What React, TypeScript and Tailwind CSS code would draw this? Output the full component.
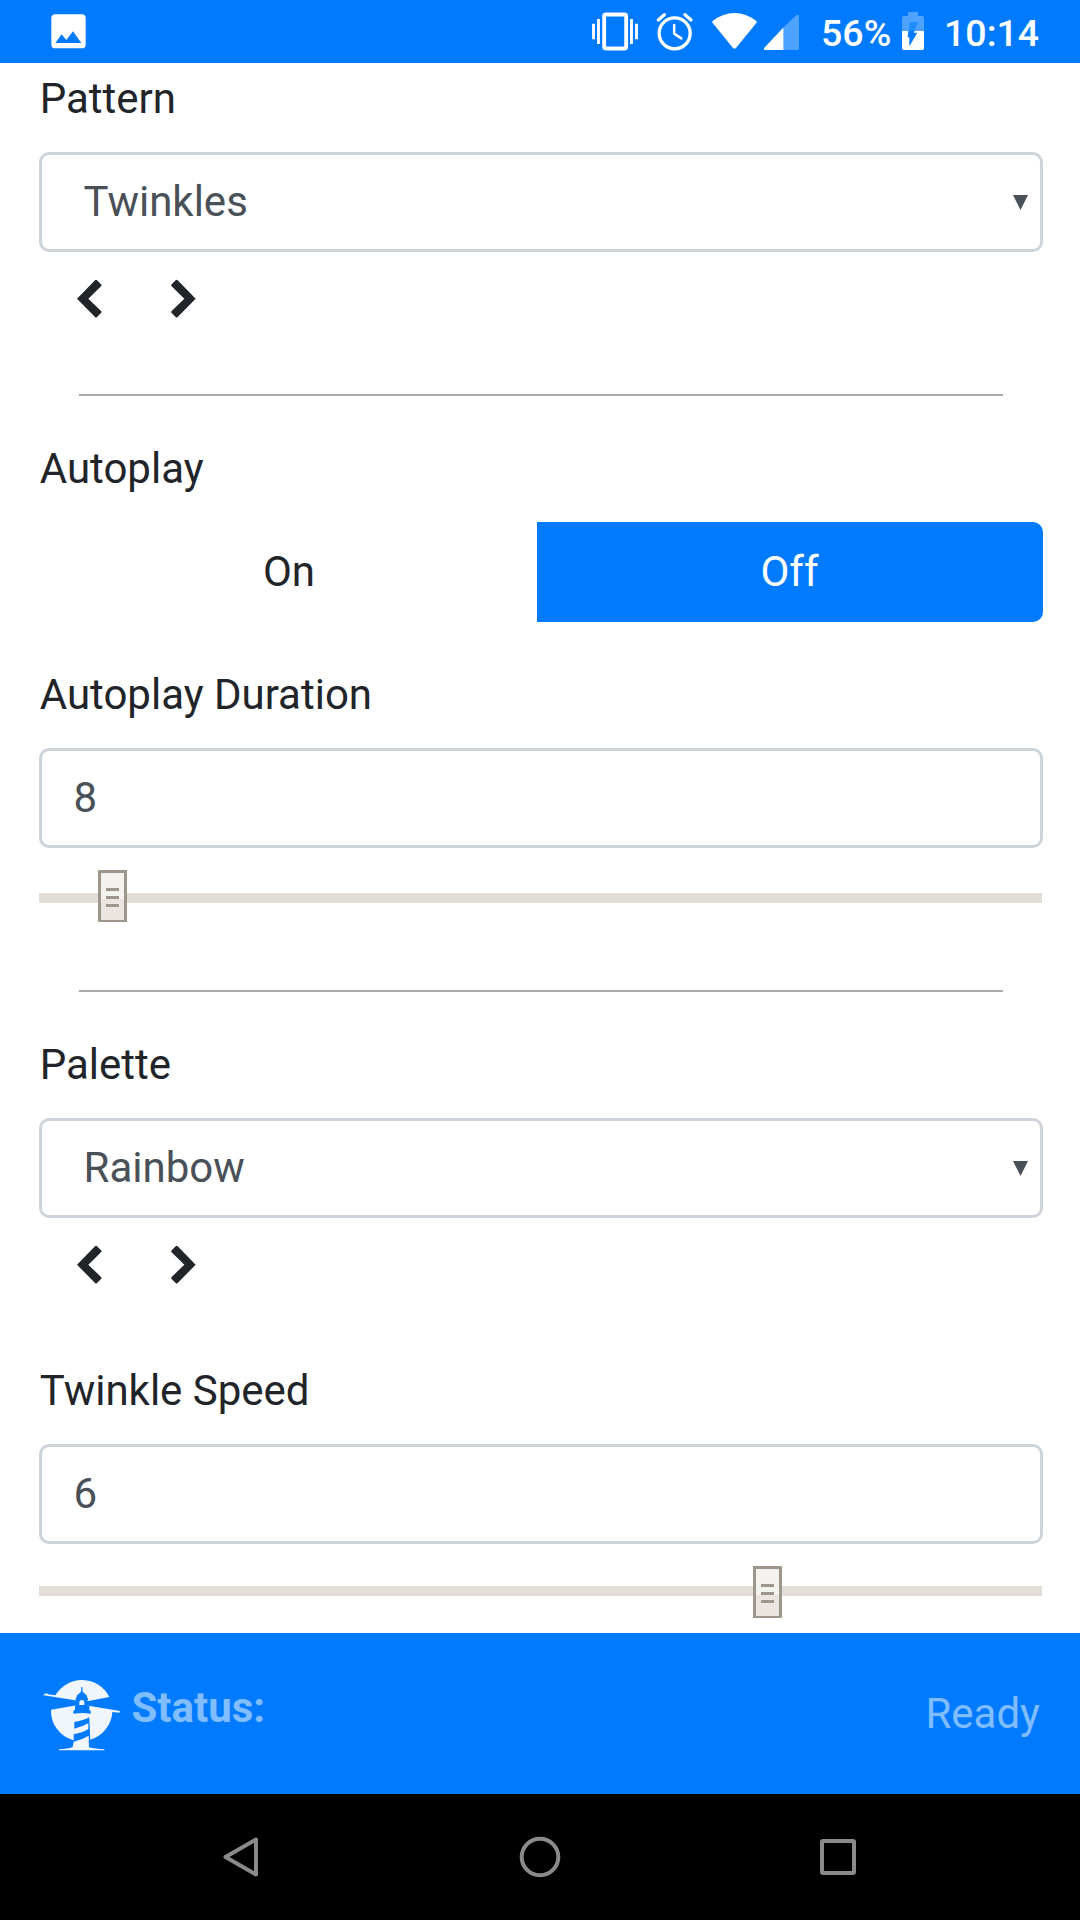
import React from "react";

function StatusBar() {
  return (
    <header className="flex h-[63px] shrink-0 items-start bg-[#007bff] pl-[50px] text-white">
      <svg className="mt-[13px] h-[37px] w-[37px] shrink-0" viewBox="150 39 111 111">
        <path
          fill="#fff"
          fillRule="evenodd"
          d="M166 43H246Q257 43 257 54V134Q257 145 246 145H166Q154 145 154 134V54Q154 43 166 43ZM166 129H244L219 94L199 120L185 103Z"
        />
      </svg>
      <svg className="mt-[10px] ml-[503px] h-[44px] w-[50px] shrink-0" viewBox="60 30 150 132">
        <g fill="none" stroke="#fff">
          <rect x="102.5" y="43.5" width="66" height="102" rx="5" strokeWidth="11.5" />
          <path strokeWidth="8.5" d="M70.5 71V118M85.5 57V132M184.500 57V132M199.500 71V118" />
        </g>
      </svg>
      <svg className="mt-[10px] ml-[15px] h-[44px] w-[40px] shrink-0" viewBox="255 30 120 132">
        <g fill="none" stroke="#fff">
          <circle cx="314" cy="100" r="46.500" strokeWidth="10" />
          <path strokeWidth="7.500" strokeLinecap="round" strokeLinejoin="round" d="M312.500 75V101L334 115" />
          <path strokeWidth="10" strokeLinecap="round" d="M265 60L283 44M345 44L363 60" />
        </g>
      </svg>
      <svg className="mt-[10px] ml-[15.500px] h-[44px] w-[47px] shrink-0" viewBox="422 30 141 132">
        <path
          fill="#fff"
          d="M427 63Q458 39 492.500 39Q527 39 558 63Q561 65 558 69L497 144Q492.500 149 488 144L427 69Q424 66 427 63Z"
        />
      </svg>
      <svg className="mt-[10px] ml-[5px] h-[44px] w-[38px] shrink-0" viewBox="579 30 114 132">
        <path fill="#fff" d="M641 82V150H585Q579 149 583 143Z" />
        <path fill="#4da3ff" d="M641 82L679 46Q687 41 687 49V145Q687 150 682 150H641Z" />
      </svg>
      <span className="mt-[10px] ml-[20.500px] w-[71px] text-[37.5px] leading-[46px] font-medium whitespace-nowrap">
        56%
      </span>
      <svg className="mt-[10px] ml-[9px] h-[44px] w-[24px] shrink-0" viewBox="993 30 72 132">
        <path fill="#4da3ff" d="M1014 36H1044V48H1057Q1062 48 1062 53V93H996V53Q996 48 1001 48H1014Z" />
        <path fill="#fff" d="M996 93H1062V145Q1062 150 1057 150H1001Q996 150 996 145Z" />
        <path fill="#1f8cff" d="M1020 66H1044L1034 93H1015Z" />
        <path fill="#007bff" d="M1015 93H1034L1031 98H1042L1018 139V112H1013Z" />
      </svg>
      <span className="mt-[10px] ml-[19px] text-[37.5px] leading-[46px] font-medium whitespace-nowrap">
        10:14
      </span>
    </header>
  );
}

function Label({ children }: { children: React.ReactNode }) {
  return <h2 className="h-[63px] pl-[0.750px] text-[42px] leading-[63px] whitespace-nowrap">{children}</h2>;
}

function SelectBox({ value }: { value: string }) {
  return (
    <div className="mt-[22px] flex h-[100px] items-center justify-between rounded-[10px] border-3 border-[#ced4da] pr-[12px] pl-[41.500px] text-[42px] leading-[63px] text-[#495057]">
      <span className="mb-[2px]">{value}</span>
      <svg className="h-[15px] w-[15px]" viewBox="0 0 15 15">
        <path fill="#495057" d="M0 0H15L7.500 15Z" />
      </svg>
    </div>
  );
}

function Stepper() {
  return (
    <div className="mt-[26.500px] flex h-[39.500px] gap-[67px] pl-[37px] text-[#212529]">
      <svg className="h-[39px] w-[27px]" viewBox="228 836 81 117">
        <path
          fill="currentColor"
          d="M231 895L285 840Q288 837 291 840L303 852Q306 855 303 858L265 895L303 932Q306 935 303 938L291 950Q288 953 285 950Z"
        />
      </svg>
      <svg className="h-[39px] w-[27px]" viewBox="510 836 81 117">
        <path
          fill="currentColor"
          d="M587 895L533 840Q530 837 527 840L515 852Q512 855 515 858L553 895L515 932Q512 935 515 938L527 950Q530 953 533 950Z"
        />
      </svg>
    </div>
  );
}

function NumberBox({ value }: { value: string }) {
  return (
    <div className="mt-[22px] flex h-[100px] items-center rounded-[10px] border-3 border-[#ced4da] pl-[31.500px] text-[42px] leading-[63px] text-[#495057]">
      <span className="mb-[2px]">{value}</span>
    </div>
  );
}

function Slider({ offset, trackClass }: { offset: number; trackClass: string }) {
  return (
    <div className={`${trackClass} relative mt-[22px] h-[52px] w-[1003px]`}>
      <div className="h-[10px] w-full bg-[#e2ddd7]" />
      <div
        className="absolute top-0 flex h-[52px] w-[29px] flex-col items-center gap-[5px] border-3 border-b-2 border-[#9d968d] bg-linear-to-b from-[#f4f2ef] from-[55%] to-[#eae5e1] to-[55%] pt-[15px]"
        style={{ left: offset }}
      >
        <i className="h-[3px] w-[13px] bg-[#9d968d]" />
        <i className="h-[3px] w-[13px] bg-[#9d968d]" />
        <i className="h-[3px] w-[13px] bg-[#9d968d]" />
      </div>
    </div>
  );
}

function Lighthouse() {
  return (
    <svg className="h-[76px] w-[80px]" viewBox="66 52 240 228">
      <g fill="#f1f5fc">
        <path d="M71 104L80 101L84 104L106 107A92 92 0 0 1 268 112L206 124L165 122L71 107Z" />
        <path d="M93 150L162 138H206L300 154L298 159L277 157A92 92 0 0 1 211 240L206 242L207 263Q225 268 253 269V272H117V269Q143 268 158 262L162 242H160A92 92 0 0 1 93 150Z" />
      </g>
      <g fill="#007bff">
        <path d="M184 82H187L188 96L201 108V114H204V122H201V138H208V150L212 154V162Q186 158 160 162V154L165 150V138H170V122H167V114H170V108L183 96Z" />
        <path d="M163 187Q191 182 208 173L211 245L208 264L206 228Q185 241 161 246V224Q188 219 205 208V191Q187 201 163 207Z" />
      </g>
      <path fill="#f1f5fc" d="M178 136V127Q178 121 185 121Q193 121 193 127V136Z" />
    </svg>
  );
}

export default function App() {
  return (
    <div className="flex h-[1920px] w-[1080px] flex-col overflow-hidden bg-white font-['Roboto',sans-serif] text-[#212529]">
      <StatusBar />
      <main className="flex h-[1570px] shrink-0 flex-col pt-[4px] pr-[37px] pl-[39px]">
        <Label>Pattern</Label>
        <SelectBox value="Twinkles" />
        <Stepper />
        <hr className="mx-[40px] mt-[76px] border-t-2 border-[#aaa]" />

        <div className="mt-[41px]">
          <Label>Autoplay</Label>
          <div className="mt-[22px] flex h-[100px] text-[42px] leading-[100px]">
            <button className="w-[498px] pl-[2px] text-center">On</button>
            <button className="w-[506px] rounded-r-[10px] bg-[#007bff] pr-[1px] text-center text-white">Off</button>
          </div>
        </div>

        <div className="mt-[41px]">
          <Label>Autoplay Duration</Label>
          <NumberBox value="8" />
          <Slider offset={59} trackClass="pt-[23px]" />
        </div>
        <hr className="mx-[40px] mt-[68px] border-t-2 border-[#aaa]" />

        <div className="mt-[41px]">
          <Label>Palette</Label>
          <SelectBox value="Rainbow" />
          <Stepper />
        </div>

        <div className="mt-[75px]">
          <Label>Twinkle Speed</Label>
          <NumberBox value="6" />
          <Slider offset={714} trackClass="pt-[20px]" />
        </div>
      </main>
      <footer className="flex h-[161px] shrink-0 items-start justify-between bg-[#007bff] pr-[40px] pl-[42px] text-[42px] leading-[63px] text-[#80bdff]">
        <div className="flex">
          <div className="mt-[44px]">
            <Lighthouse />
          </div>
          <span className="mt-[43px] ml-[9.500px] font-bold">Status:</span>
        </div>
        <span className="mt-[49px]">Ready</span>
      </footer>
      <nav className="flex h-[126px] shrink-0 items-center bg-black pl-[220px]">
        <svg className="h-[44px] w-[42px]" viewBox="0 0 42 44" fill="none" stroke="#8a8a8a" strokeWidth="4">
          <path strokeLinejoin="round" d="M36 4.500V39.500L5.500 22Z" />
        </svg>
        <svg className="ml-[256px] h-[44px] w-[44px]" viewBox="0 0 44 44" fill="none" stroke="#8a8a8a" strokeWidth="4">
          <circle cx="22" cy="22" r="18.300" />
        </svg>
        <svg className="ml-[254px] h-[44px] w-[44px]" viewBox="0 0 44 44" fill="none" stroke="#8a8a8a" strokeWidth="4">
          <rect x="6" y="6" width="32" height="32" rx="1" />
        </svg>
      </nav>
    </div>
  );
}
